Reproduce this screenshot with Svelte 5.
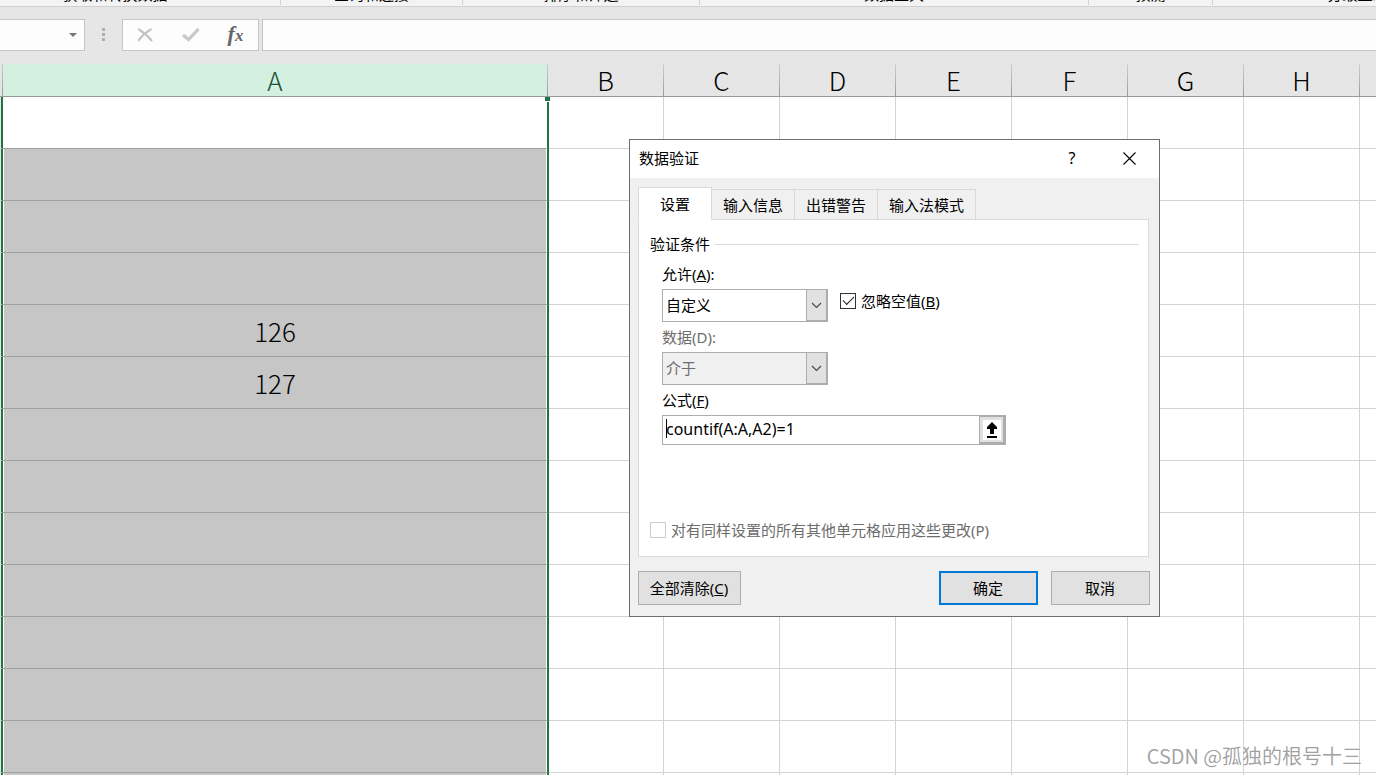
<script lang="ts">
  type Row = { a: string };

  const groups = [
    { name: '获取和转换数据', size: 'wide' },
    { name: '查询和连接', size: 'small' },
    { name: '排序和筛选', size: 'medium' },
    { name: '数据工具', size: 'large' },
    { name: '预测', size: 'tiny' },
    { name: '分级显示', size: 'last' },
  ];
  const columns = ['B', 'C', 'D', 'E', 'F', 'G', 'H', ''];
  const rows: Row[] = Array.from({ length: 14 }, (_, i) => ({
    a: i === 4 ? '126' : i === 5 ? '127' : '',
  }));
  const tabs = ['设置', '输入信息', '出错警告', '输入法模式'];

  let activeTab = $state(0);
  let allow = $state('自定义');
  let ignoreBlank = $state(true);
  let formula = $state('countif(A:A,A2)=1');
</script>

{#snippet chevron()}
  <span class="arrow" aria-hidden="true">
    <svg width="11" height="7" viewBox="0 0 11 7" fill="none" stroke="#444" stroke-width="1.1">
      <path d="M1 1l4.5 4.5L10 1" />
    </svg>
  </span>
{/snippet}

<div class="app">
  <header class="ribbon">
    {#each groups as group}
      <div class="group {group.size}"><span>{group.name}</span></div>
    {/each}
  </header>

  <div class="formula-bar">
    <div class="name-box">
      <svg width="8" height="4" viewBox="0 0 8 4" aria-hidden="true"><path d="M0 0h8L4 4z" fill="#777" /></svg>
    </div>
    <svg class="dots" width="3" height="13" viewBox="0 0 3 13" fill="#b0b0b0" aria-hidden="true">
      <path d="M0 0h3v3H0zM0 5h3v3H0zM0 10h3v3H0z" />
    </svg>
    <div class="tools">
      <button type="button" aria-label="取消">
        <svg width="16" height="14" viewBox="0 0 16 14" fill="none" stroke="#c4c4c4" stroke-width="2.2">
          <path d="M0 1C5 4 10 8 14 13M13.500 1C8 4 3 9 0 13" />
        </svg>
      </button>
      <button type="button" aria-label="输入">
        <svg width="18" height="14" viewBox="0 0 18 14" fill="none" stroke="#c8c8c8" stroke-width="3.2">
          <path d="M1 7l5.500 4.500L16.500 1" />
        </svg>
      </button>
      <button type="button" class="fx" aria-label="插入函数"><i>f</i><i class="x">x</i></button>
    </div>
    <input class="formula-input" type="text" aria-label="编辑栏" />
  </div>

  <main class="sheet">
    <table>
      <thead>
        <tr>
          <th class="row-head"></th>
          <th class="col-a">A</th>
          {#each columns as column}
            <th>{column}</th>
          {/each}
        </tr>
      </thead>
      <tbody>
        {#each rows as row, i}
          <tr>
            <td class="row-head"></td>
            <td class="selected" class:first={i === 0}>
              {row.a}
              {#if i === 0}<span class="handle"></span>{/if}
            </td>
            {#each columns as _}
              <td></td>
            {/each}
          </tr>
        {/each}
      </tbody>
    </table>
  </main>

  <div class="dialog" role="dialog" aria-label="数据验证">
    <div class="titlebar">
      <span>数据验证</span>
      <button type="button" class="help">?</button>
      <button type="button" aria-label="关闭">
        <svg width="13" height="13" viewBox="0 0 13 13" stroke="#000" stroke-width="1.1">
          <path d="M.5.5l12 12M12.500.5l-12 12" />
        </svg>
      </button>
    </div>

    <div class="content">
      <div class="tabs" role="tablist">
        {#each tabs as tab, i}
          <button
            type="button"
            role="tab"
            class:active={activeTab === i}
            aria-selected={activeTab === i}
            onclick={() => (activeTab = i)}>{tab}</button>
        {/each}
      </div>

      <div class="panel" role="tabpanel">
        <div class="legend">验证条件</div>
        <div class="fields">
          <label for="allow">允许(<u>A</u>):</label>
          <div class="line">
            <div class="combo">
              <select id="allow" bind:value={allow}>
                <option>自定义</option>
              </select>
              {@render chevron()}
            </div>
            <label class="check">
              <input type="checkbox" bind:checked={ignoreBlank} />
              <span>忽略空值(<u>B</u>)</span>
            </label>
          </div>
          <label for="data" class="muted">数据(D):</label>
          <div class="combo">
            <select id="data" disabled>
              <option>介于</option>
            </select>
            {@render chevron()}
          </div>
          <label for="formula">公式(<u>F</u>)</label>
          <div class="reference">
            <input id="formula" type="text" bind:value={formula} />
            <span class="caret"></span>
            <button type="button" aria-label="折叠对话框">
              <svg width="18" height="20" viewBox="0 0 18 20" aria-hidden="true">
                <path d="M0 0h18v20H0z" fill="#fff" />
                <path d="M9 2l5 5v2h-3v5H7V9H4V7zM4 16h10v2H4z" />
              </svg>
            </button>
          </div>
        </div>
        <label class="check apply muted">
          <input type="checkbox" disabled />
          <span>对有同样设置的所有其他单元格应用这些更改(P)</span>
        </label>
      </div>

      <div class="actions">
        <button type="button" class="clear">全部清除(<u>C</u>)</button>
        <button type="button" class="primary">确定</button>
        <button type="button">取消</button>
      </div>
    </div>
  </div>

  <div class="watermark">CSDN @孤独的根号十三</div>
</div>

<style>
  :global(body) {
    margin: 0;
  }
  .app {
    position: relative;
    display: flex;
    flex-direction: column;
    height: 100vh;
    overflow: hidden;
    background: #fff;
    color: #000;
    font: 15px/20px 'Noto Sans', 'Noto Sans CJK SC', sans-serif;
  }
  .app *,
  .app *::before {
    box-sizing: border-box;
  }
  button,
  input,
  select {
    margin: 0;
    padding: 0;
    border: 0;
    border-radius: 0;
    background: none;
    color: inherit;
    font: inherit;
    outline: none;
  }

  /* ribbon, scrolled so only the foot of the group names shows */
  .ribbon {
    display: flex;
    flex: none;
    height: 7px;
    overflow: hidden;
    border-bottom: 1px solid #d0d0d0;
    background: #f3f3f3;
  }
  .group {
    display: flex;
    flex: none;
    align-items: flex-end;
    justify-content: center;
    height: 5px;
    padding-bottom: 1px;
    border-right: 1px solid #d4d4d4;
  }
  .wide {
    width: 331px;
    margin-left: -50px;
  }
  .small {
    width: 182px;
  }
  .medium {
    width: 237px;
  }
  .large {
    width: 389px;
  }
  .tiny {
    width: 124px;
  }
  .last {
    width: 290px;
  }

  .formula-bar {
    display: flex;
    flex: none;
    align-items: center;
    height: 57px;
    padding-bottom: 2px;
    background: #e6e6e6;
  }
  .name-box,
  .tools,
  .formula-input {
    height: 32px;
    border: 1px solid #c6c6c6;
    background: #fdfdfd;
  }
  .name-box {
    display: flex;
    flex: none;
    align-items: center;
    justify-content: flex-end;
    width: 85px;
    padding-right: 7px;
    border-left: 0;
  }
  .dots {
    flex: none;
    margin: 0 17px;
  }
  .tools {
    display: flex;
    flex: none;
    width: 137px;
    margin-right: 3px;
  }
  .tools button {
    display: flex;
    flex: 1;
    align-items: center;
    justify-content: center;
  }
  .tools .fx {
    padding-bottom: 2px;
    color: #666;
    font: bold 22px/28px 'Liberation Serif', serif;
  }
  .fx .x {
    padding-top: 4px;
    font-size: 17px;
  }
  .formula-input {
    flex: 1;
    min-width: 0;
    padding: 0 6px;
    border-right: 0;
  }

  .sheet {
    flex: 1;
    min-height: 0;
    overflow: hidden;
  }
  table {
    width: 1476px;
    table-layout: fixed;
    border-collapse: separate;
    border-spacing: 0;
    font: 300 26px/34px 'Noto Sans CJK SC', sans-serif;
  }
  th,
  td {
    width: 116px;
    padding: 0;
    border-right: 1px solid #d4d4d4;
    border-bottom: 1px solid #d4d4d4;
    text-align: center;
  }
  th {
    height: 33px;
    border-right: 1px solid;
    border-bottom: 1px solid #999;
    border-image: linear-gradient(#d0d0d0, #999) 1;
    background: #e6e6e6;
    font-weight: 300;
    line-height: 32px;
  }
  td {
    height: 52px;
  }
  .row-head {
    width: 3px;
    background: #e6e6e6;
  }
  th.col-a {
    width: 545px;
    background: #d3f0e0;
    color: #1d5338;
  }
  td.row-head {
    border-right: 2px solid #217346;
  }
  .selected {
    position: relative;
    border-right-color: #217346;
    border-bottom-color: #a0a0a0;
    background: #c6c6c6;
    box-shadow:
      inset 1px 0 #fff,
      inset -1px 0 #fff,
      1px 0 #217346;
  }
  .first {
    background: #fff;
  }
  .handle {
    position: absolute;
    top: 0;
    right: -3px;
    width: 5px;
    height: 5px;
    border-bottom: 1px solid #fff;
    background: #217346;
  }

  .dialog {
    position: absolute;
    top: 139px;
    left: 629px;
    width: 531px;
    border: 1px solid #6e6e6e;
    background: #f0f0f0;
  }
  .titlebar {
    display: flex;
    height: 38px;
    background: #fff;
  }
  .titlebar span {
    flex: 1;
    padding: 8px 9px;
  }
  .titlebar button {
    display: flex;
    align-items: center;
    justify-content: center;
    width: 60px;
    padding-bottom: 2px;
  }
  .titlebar .help {
    width: 54px;
    font-size: 16px;
  }
  .content {
    padding: 9px 10px 11px 8px;
  }
  .tabs {
    display: flex;
    align-items: flex-end;
    position: relative;
    z-index: 1;
    margin-bottom: -1px;
  }
  .tabs button {
    height: 31px;
    padding: 0 11px;
    border: 1px solid #d9d9d9;
    border-left: 0;
    background: #f0f0f0;
  }
  .tabs .active {
    height: 33px;
    padding: 0 21px;
    border-left: 1px solid #d9d9d9;
    border-bottom-color: #fff;
    background: #fff;
  }
  .panel {
    padding: 14px 9px 16px 11px;
    border: 1px solid #d9d9d9;
    background: #fff;
  }
  .legend {
    display: flex;
    align-items: center;
    gap: 5px;
  }
  .legend::after {
    content: '';
    flex: 1;
    height: 1px;
    background: #dcdcdc;
  }
  .fields {
    display: flex;
    flex-direction: column;
    align-items: flex-start;
    gap: 5px;
    padding: 10px 0 75px 12px;
  }
  .line {
    display: flex;
    gap: 12px;
  }
  .combo {
    position: relative;
    width: 166px;
    height: 33px;
  }
  select {
    appearance: none;
    width: 100%;
    height: 100%;
    padding: 0 26px 2px 3px;
    border: 1px solid #abadb3;
    background: #fff;
  }
  select:disabled {
    background: #f0f0f0;
    color: #6d6d6d;
    opacity: 1;
  }
  .arrow {
    position: absolute;
    top: 0;
    right: 0;
    display: grid;
    place-items: center;
    width: 22px;
    height: 33px;
    border: 1px solid #adadad;
    border-right-width: 2px;
    border-bottom-width: 2px;
    background: #e1e1e1;
    pointer-events: none;
  }
  .muted {
    color: #6d6d6d;
  }
  .check {
    display: flex;
    gap: 5px;
    padding-top: 2px;
  }
  .check input {
    appearance: none;
    display: grid;
    place-items: center;
    width: 16px;
    height: 16px;
    margin-top: 2px;
    border: 1px solid #333;
    background: #fff;
  }
  .check input:checked::before {
    content: '';
    width: 11px;
    height: 6px;
    margin-bottom: 4px;
    border: solid #222;
    border-width: 0 0 1px 1px;
    transform: rotate(-45deg);
  }
  .check input:disabled {
    border-color: #ccc;
  }
  .apply {
    padding-top: 0;
  }
  .reference {
    position: relative;
    display: flex;
    width: 344px;
    height: 30px;
    border: 1px solid #abadb3;
  }
  .reference input {
    flex: 1;
    min-width: 0;
    padding: 0 3px 3px;
    font-size: 16px;
  }
  .caret {
    position: absolute;
    top: 3px;
    left: 3px;
    width: 1px;
    height: 19px;
    background: #000;
  }
  .reference button {
    display: grid;
    place-items: center;
    width: 26px;
    border: 1px solid #adadad;
    border-right-width: 2px;
    border-bottom-width: 2px;
    background: #e1e1e1;
  }

  .actions {
    display: flex;
    gap: 13px;
    margin: 14px -1px 0 0;
  }
  .actions button {
    width: 99px;
    height: 34px;
    padding-right: 1px;
    border: 1px solid #adadad;
    background: #e1e1e1;
  }
  .actions .clear {
    width: 103px;
    margin-right: auto;
  }
  .actions .primary {
    border: 2px solid #0078d7;
  }

  .watermark {
    position: absolute;
    right: 14px;
    bottom: 6px;
    color: #a0a0a0;
    font: 350 20px/26px 'Noto Sans CJK SC', sans-serif;
  }
</style>
